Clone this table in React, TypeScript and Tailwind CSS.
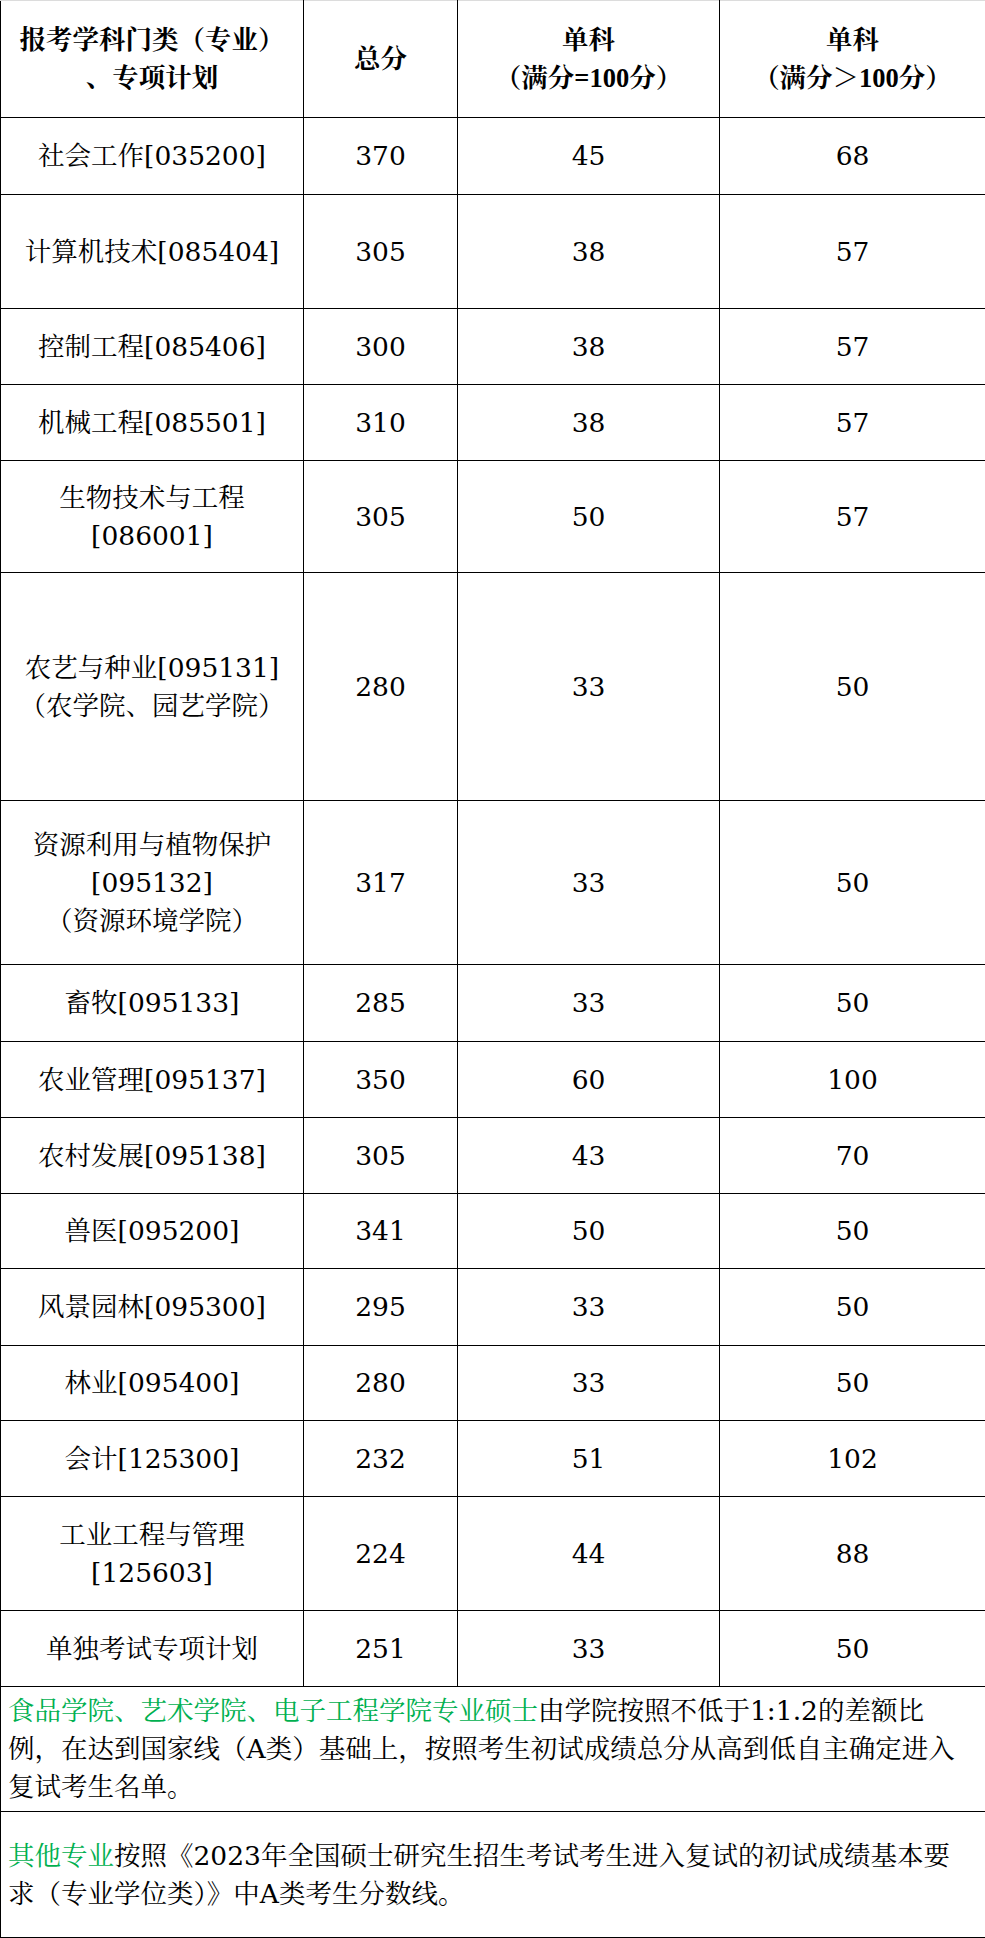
type Row = {
  name: string[];
  total: string;
  single: string;
  over: string;
  h: string;
};

const rows: Row[] = [
  { name: ['社会工作[035200]'], total: '370', single: '45', over: '68', h: 'h-[77px]' },
  { name: ['计算机技术[085404]'], total: '305', single: '38', over: '57', h: 'h-[114px]' },
  { name: ['控制工程[085406]'], total: '300', single: '38', over: '57', h: 'h-[76px]' },
  { name: ['机械工程[085501]'], total: '310', single: '38', over: '57', h: 'h-[76px]' },
  { name: ['生物技术与工程', '[086001]'], total: '305', single: '50', over: '57', h: 'h-[112px]' },
  { name: ['农艺与种业[095131]', '（农学院、园艺学院）'], total: '280', single: '33', over: '50', h: 'h-[228px]' },
  { name: ['资源利用与植物保护', '[095132]', '（资源环境学院）'], total: '317', single: '33', over: '50', h: 'h-[164px]' },
  { name: ['畜牧[095133]'], total: '285', single: '33', over: '50', h: 'h-[77px]' },
  { name: ['农业管理[095137]'], total: '350', single: '60', over: '100', h: 'h-[76px]' },
  { name: ['农村发展[095138]'], total: '305', single: '43', over: '70', h: 'h-[76px]' },
  { name: ['兽医[095200]'], total: '341', single: '50', over: '50', h: 'h-[75px]' },
  { name: ['风景园林[095300]'], total: '295', single: '33', over: '50', h: 'h-[77px]' },
  { name: ['林业[095400]'], total: '280', single: '33', over: '50', h: 'h-[75px]' },
  { name: ['会计[125300]'], total: '232', single: '51', over: '102', h: 'h-[76px]' },
  { name: ['工业工程与管理', '[125603]'], total: '224', single: '44', over: '88', h: 'h-[114px]' },
  { name: ['单独考试专项计划'], total: '251', single: '33', over: '50', h: 'h-[76px]' },
];

const cell = 'border border-black p-0 text-center align-middle';

function Lines({ lines }: { lines: string[] }) {
  return (
    <>
      {lines.map((l, i) => (
        <div key={i}>{l}</div>
      ))}
    </>
  );
}

export default function App() {
  return (
    <div className="w-[985px] bg-white text-black font-['DejaVu_Serif','Noto_Serif_CJK_SC','Noto_Sans_CJK_SC',serif] text-[26.5px] leading-[38px]">
      <table className="w-[985px] table-fixed border-collapse">
        <colgroup>
          <col className="w-[303px]" />
          <col className="w-[154px]" />
          <col className="w-[262px]" />
          <col className="w-[266px]" />
        </colgroup>
        <thead>
          <tr className="h-[117px] font-bold font-['Liberation_Serif','Noto_Serif_CJK_SC','Noto_Sans_CJK_SC',serif]">
            <th className={`${cell} border-t-[#dcdcdc]`}>
              <Lines lines={['报考学科门类（专业）', '、专项计划']} />
            </th>
            <th className={`${cell} border-t-[#dcdcdc]`}>总分</th>
            <th className={`${cell} border-t-[#dcdcdc]`}>
              <Lines lines={['单科', '（满分=100分）']} />
            </th>
            <th className={`${cell} border-t-[#dcdcdc]`}>
              <Lines lines={['单科', '（满分＞100分）']} />
            </th>
          </tr>
        </thead>
        <tbody>
          {rows.map((r) => (
            <tr key={r.name.join('')} className={r.h}>
              <td className={cell}>
                <Lines lines={r.name} />
              </td>
              <td className={cell}>{r.total}</td>
              <td className={cell}>{r.single}</td>
              <td className={cell}>{r.over}</td>
            </tr>
          ))}
          <tr className="h-[125px]">
            <td colSpan={4} className="border border-black py-0 pl-[7px] pr-[12px] text-left align-middle">
              <span className="text-[#00b050]">食品学院、艺术学院、电子工程学院专业硕士</span>
              由学院按照不低于1:1.2的差额比例，在达到国家线（A类）基础上，按照考生初试成绩总分从高到低自主确定进入复试考生名单。
            </td>
          </tr>
          <tr className="h-[126px]">
            <td colSpan={4} className="border border-black py-0 pl-[7px] pr-[12px] text-left align-middle">
              <span className="text-[#00b050]">其他专业</span>
              按照《2023年全国硕士研究生招生考试考生进入复试的初试成绩基本要求（专业学位类）》中A类考生分数线。
            </td>
          </tr>
        </tbody>
      </table>
    </div>
  );
}
